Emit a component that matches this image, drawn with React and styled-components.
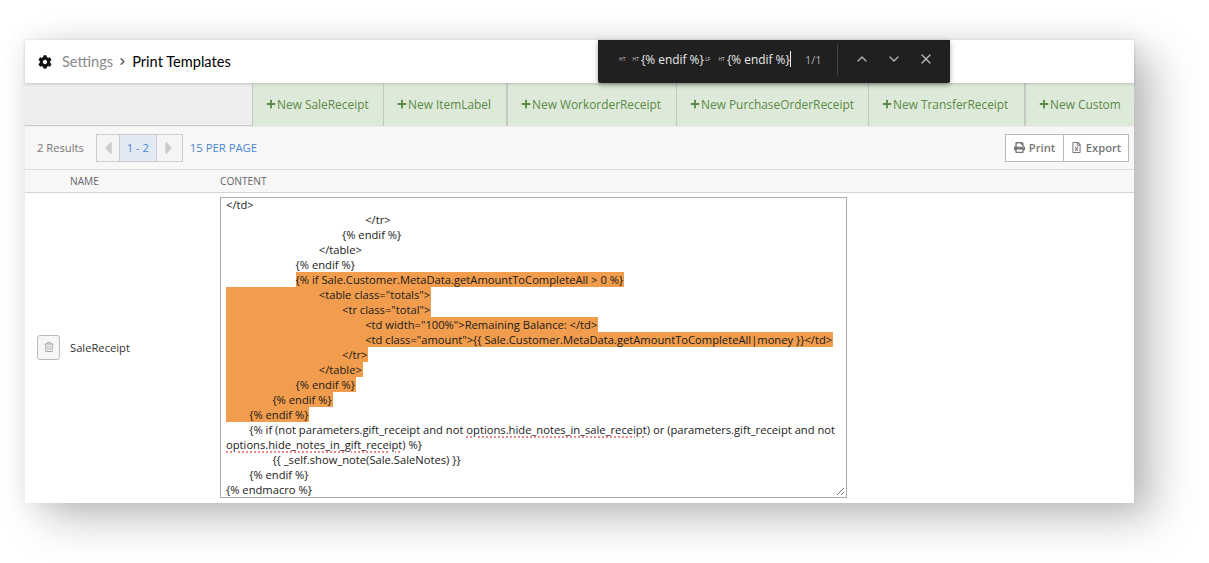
import React from 'react';
import styled, { createGlobalStyle } from 'styled-components';
import { FaCog, FaPrint, FaRegFileExcel, FaRegTrashAlt, FaCaretLeft, FaCaretRight, FaPlus } from 'react-icons/fa';
import { ChevronUp, ChevronDown, ChevronRight, X } from 'lucide-react';

const GlobalStyle = createGlobalStyle`
  html, body {
    margin: 0;
    height: 100%;
    overflow: hidden;
    background: #fff;
    font-family: 'Open Sans', sans-serif;
  }
`;

const Page = styled.div`
  padding: 40px 75px 60px 25px;
`;

const Window = styled.div`
  position: relative;
  height: 463px;
  display: flex;
  flex-direction: column;
  background: #fff;
  box-shadow: 20px 15px 40px rgba(0, 0, 0, 0.25), 0 0 22px rgba(0, 0, 0, 0.08);
`;

const Header = styled.header`
  height: 43px;
  flex: none;
  display: flex;
  align-items: center;
  padding-left: 13px;
  font-family: Lato, sans-serif;
  font-size: 14.6px;
  background: #fff;
  box-shadow: 0 1px 3px rgba(0, 0, 0, 0.18);
  position: relative;
`;

const Crumb = styled.span`
  color: ${(p) => (p.$current ? '#000' : '#888')};
  margin-left: ${(p) => (p.$current ? '0' : '10px')};
`;

const Separator = styled.span`
  display: flex;
  width: 19px;
  justify-content: center;
  color: #555;
`;

const TabBar = styled.nav`
  height: 43px;
  flex: none;
  display: flex;
  justify-content: flex-end;
  background: #eee;
  box-shadow: inset 0 -1px 0 #ccc;
`;

const Tab = styled.a`
  display: flex;
  align-items: center;
  gap: 1px;
  width: ${(p) => p.$w}px;
  padding: 0 0 1px 13px;
  box-sizing: border-box;
  border-left: ${(p) => (p.$thick ? '2px' : '1px')} solid #c6c8c4;
  background: #deead9;
  color: #5b8947;
  font-size: 11.9px;
`;

const Toolbar = styled.div`
  height: 43px;
  flex: none;
  box-sizing: border-box;
  display: flex;
  align-items: center;
  padding: 0 5px 0 12px;
  background: #f7f7f7;
  border-top: 1px solid #ececec;
  font-size: 11.2px;
  color: #777;
`;

const ResultCount = styled.span`
  padding-bottom: 2px;
`;

const Pager = styled.div`
  display: flex;
  height: 28px;
  margin-left: 12px;
  box-sizing: border-box;
  border: 1px solid #ccc;
  background: #f5f5f5;
`;

const PagerArrow = styled.span`
  width: ${(p) => p.$w}px;
  display: flex;
  align-items: center;
  justify-content: center;
  color: #ccc;
  font-size: 20px;
`;

const PagerCurrent = styled.span`
  width: 38px;
  padding-bottom: 2px;
  box-sizing: border-box;
  display: flex;
  align-items: center;
  justify-content: center;
  background: #e1e9f5;
  border-right: 1px solid #ccc;
  border-left: 1px solid #ccc;
  color: #4a86cf;
`;

const PerPage = styled.a`
  margin-left: 7px;
  padding-bottom: 2px;
  font-size: 11.3px;
  color: #4a86cf;
`;

const ActionGroup = styled.div`
  display: flex;
  margin-left: auto;
  height: 28px;
  box-sizing: border-box;
  border: 1px solid #bbb;
  background: #fff;
`;

const ActionButton = styled.button`
  width: ${(p) => p.$w}px;
  display: flex;
  align-items: center;
  justify-content: center;
  gap: 4px;
  padding: 0 0 2px;
  border: 0;
  border-left: ${(p) => (p.$divided ? '1px solid #bbb' : '0')};
  background: transparent;
  color: #777;
  font-family: 'Open Sans', sans-serif;
  font-size: 11.2px;
  font-weight: 600;
`;

const TableHead = styled.div`
  height: 24px;
  flex: none;
  box-sizing: border-box;
  display: flex;
  align-items: center;
  background: #f7f7f7;
  border-top: 1px solid #ddd;
  border-bottom: 1px solid #d4d4d4;
  font-size: 10.2px;
  color: #666;
`;

const NameHead = styled.span`
  width: 195px;
  padding-left: 45px;
  box-sizing: border-box;
`;

const Row = styled.div`
  flex: 1;
  min-height: 0;
  display: flex;
  align-items: center;
  padding: 0 0 2px 12px;
`;

const TrashButton = styled.button`
  width: 23px;
  height: 25px;
  padding: 0;
  display: flex;
  align-items: center;
  justify-content: center;
  background: #f6f6f6;
  border: 1px solid #bbb;
  border-radius: 3px;
  color: #aaa;
  font-size: 10px;
`;

const RowName = styled.span`
  width: 160px;
  padding-left: 10px;
  box-sizing: border-box;
  font-size: 11.2px;
  color: #333;
`;

const Line = styled.div`
  min-height: 15px;
`;

const Editor = styled.div`
  position: relative;
  align-self: flex-start;
  width: 627px;
  height: 301px;
  margin-top: 4px;
  box-sizing: border-box;
  padding: 0 5px;
  border: 1px solid #aaa;
  background: #fff;
  font-size: 11.2px;
  line-height: 15px;
  color: #1a1a1a;
  tab-size: 23.2px;
  white-space: pre-wrap;

  ${Line}:first-child {
    margin-top: -1px;
  }
`;

const Mark = styled.span`
  display: inline-block;
  height: 15px;
  padding-right: 1px;
  background: #f19d4d;
`;

const Squiggle = styled.span`
  text-decoration: underline dotted #ee8a8a 2px;
  text-underline-offset: 2px;
`;

const Grip = styled.svg`
  position: absolute;
  right: 1px;
  bottom: 1px;
`;

const FindBar = styled.div`
  position: absolute;
  top: 0;
  left: 573px;
  width: 352px;
  height: 43px;
  padding-bottom: 5px;
  box-sizing: border-box;
  display: flex;
  align-items: center;
  background: #202020;
  border-radius: 0 0 2px 2px;
  box-shadow: 0 2px 5px rgba(0, 0, 0, 0.35);
  color: #e8e8e8;
  font-size: 11.9px;
`;

const FindQuery = styled.div`
  width: 180px;
  margin-left: 21px;
  display: flex;
  align-items: center;
  white-space: pre;
`;

const ControlChar = styled.span`
  font-size: 5px;
  color: #ccc;
  margin: 0 ${(p) => p.$gap || 4}px 0 0;
`;

const Caret = styled.span`
  width: 1px;
  height: 16px;
  background: #eee;
`;

const FindCount = styled.span`
  width: 38px;
  padding-left: 6px;
  box-sizing: border-box;
  font-size: 11px;
  color: #aaa;
`;

const FindDivider = styled.span`
  width: 1px;
  height: 31px;
  background: #444;
`;

const FindIcons = styled.div`
  display: flex;
  gap: 16px;
  margin-left: 16px;
  color: #b5b5b5;
`;

const TABS = [
  { label: 'New SaleReceipt', w: 131 },
  { label: 'New ItemLabel', w: 123 },
  { label: 'New WorkorderReceipt', w: 170, thick: true },
  { label: 'New PurchaseOrderReceipt', w: 192 },
  { label: 'New TransferReceipt', w: 156 },
  { label: 'New Custom', w: 110, thick: true },
];

export default function App() {
  return (
    <Page>
      <GlobalStyle />
      <Window>
        <Header>
          <FaCog size={14} color="#111" />
          <Crumb>Settings</Crumb>
          <Separator>
            <ChevronRight size={11} strokeWidth={3} />
          </Separator>
          <Crumb $current>Print Templates</Crumb>
        </Header>
        <TabBar>
          {TABS.map((t) => (
            <Tab key={t.label} $w={t.w} $thick={t.thick}>
              <FaPlus size={10} />
              {t.label}
            </Tab>
          ))}
        </TabBar>
        <Toolbar>
          <ResultCount>2 Results</ResultCount>
          <Pager>
            <PagerArrow $w={22}>
              <FaCaretLeft />
            </PagerArrow>
            <PagerCurrent>1 - 2</PagerCurrent>
            <PagerArrow $w={25}>
              <FaCaretRight />
            </PagerArrow>
          </Pager>
          <PerPage>15 PER PAGE</PerPage>
          <ActionGroup>
            <ActionButton $w={57}>
              <FaPrint size={11} />
              Print
            </ActionButton>
            <ActionButton $w={65} $divided>
              <FaRegFileExcel size={11} />
              Export
            </ActionButton>
          </ActionGroup>
        </Toolbar>
        <TableHead>
          <NameHead>NAME</NameHead>
          <span>CONTENT</span>
        </TableHead>
        <Row>
          <TrashButton>
            <FaRegTrashAlt />
          </TrashButton>
          <RowName>SaleReceipt</RowName>
          <Editor>
            <Line>{'</td>'}</Line>
            <Line>{'\t\t\t\t\t\t</tr>'}</Line>
            <Line>{'\t\t\t\t\t{% endif %}'}</Line>
            <Line>{'\t\t\t\t</table>'}</Line>
            <Line>{'\t\t\t{% endif %}'}</Line>
            <Line>
              {'\t\t\t'}
              <Mark>{'{% if Sale.Customer.MetaData.getAmountToCompleteAll > 0 %}'}</Mark>
            </Line>
            <Line>
              <Mark>{'\t\t\t\t<table class="totals">'}</Mark>
            </Line>
            <Line>
              <Mark>
                {'\t\t\t\t\t<'}
                <Squiggle>tr</Squiggle>
                {' class="total">'}
              </Mark>
            </Line>
            <Line>
              <Mark>{'\t\t\t\t\t\t<td width="100%">Remaining Balance: </td>'}</Mark>
            </Line>
            <Line>
              <Mark>{'\t\t\t\t\t\t<td class="amount">{{ Sale.Customer.MetaData.getAmountToCompleteAll|money }}</td>'}</Mark>
            </Line>
            <Line>
              <Mark>{'\t\t\t\t\t</tr>'}</Mark>
            </Line>
            <Line>
              <Mark>{'\t\t\t\t</table>'}</Mark>
            </Line>
            <Line>
              <Mark>{'\t\t\t{% endif %}'}</Mark>
            </Line>
            <Line>
              <Mark>{'\t\t{% endif %}'}</Mark>
            </Line>
            <Line>
              <Mark>{'\t{% endif %}'}</Mark>
            </Line>
            <Line>
              {'\t{% if (not parameters.gift_receipt and not '}
              <Squiggle>options.hide_notes_in_sale_receipt</Squiggle>
              {') or (parameters.gift_receipt and not '}
              <Squiggle>options.hide_notes_in_gift_receipt</Squiggle>
              {') %}'}
            </Line>
            <Line>{'\t\t{{ _self.show_note(Sale.SaleNotes) }}'}</Line>
            <Line>{'\t{% endif %}'}</Line>
            <Line>{'{% endmacro %}'}</Line>
            <Grip width="9" height="9" viewBox="0 0 9 9">
              <path d="M1 8 L8 1 M5 8 L8 5" stroke="#777" strokeWidth="1" />
            </Grip>
          </Editor>
        </Row>
        <FindBar>
          <FindQuery>
            <ControlChar $gap={7}>HT</ControlChar>
            <ControlChar $gap={2}>HT</ControlChar>
            {'{% endif %}'}
            <ControlChar $gap={8}>{' LF'}</ControlChar>
            <ControlChar $gap={2}>HT</ControlChar>
            {'{% endif %}'}
            <Caret />
          </FindQuery>
          <FindCount>1/1</FindCount>
          <FindDivider />
          <FindIcons>
            <ChevronUp size={16} />
            <ChevronDown size={16} />
            <X size={16} />
          </FindIcons>
        </FindBar>
      </Window>
    </Page>
  );
}
